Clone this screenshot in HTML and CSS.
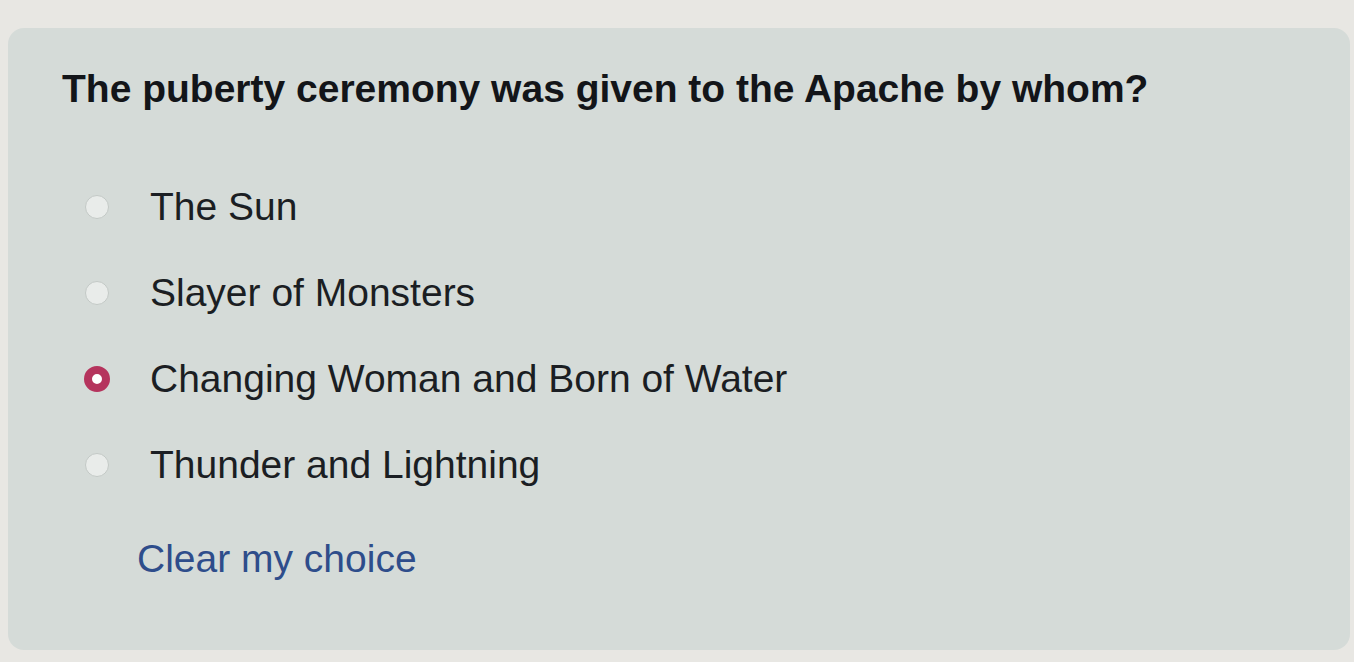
FILE: index.html
```html
<!DOCTYPE html>
<html>
<head>
<meta charset="utf-8">
<link rel="stylesheet" href="styles.css">
</head>
<body>
<div class="page">
  <div class="card">
    <h1 class="question">The puberty ceremony was given to the Apache by whom?</h1>
    <div class="options">
      <label class="option"><span class="radio"></span><span class="label">The Sun</span></label>
      <label class="option"><span class="radio"></span><span class="label">Slayer of Monsters</span></label>
      <label class="option"><span class="radio checked"></span><span class="label">Changing Woman and Born of Water</span></label>
      <label class="option"><span class="radio"></span><span class="label">Thunder and Lightning</span></label>
    </div>
    <a class="clear" href="#">Clear my choice</a>
  </div>
</div>
</body>
</html>
```
FILE: styles.css
```css
html, body {
  margin: 0;
  padding: 0;
  background: #e8e7e3;
  overflow: hidden;
}
.page {
  padding: 28px 4px 12px 8px;
  box-sizing: border-box;
  height: 662px;
  display: flex;
}
.card {
  flex: 1;
  background: #d5dbd8;
  border-radius: 16px;
  box-sizing: border-box;
  padding: 38px 0 0 54px;
  font-family: "Liberation Sans", Arial, sans-serif;
  display: flex;
  flex-direction: column;
  align-items: flex-start;
}
.question {
  margin: 0;
  font-size: 39px;
  line-height: 46px;
  font-weight: bold;
  color: #131519;
}
.options {
  display: flex;
  flex-direction: column;
  margin-top: 52px;
  padding-left: 23px;
}
.option {
  display: flex;
  align-items: center;
  height: 86px;
}
.radio {
  width: 24px;
  height: 24px;
  border-radius: 50%;
  background: #e9ecea;
  border: 1px solid #c3c9c6;
  box-sizing: border-box;
  flex: none;
}
.radio.checked {
  background: #ffffff;
  border: 8px solid #b5345d;
  width: 26px;
  height: 26px;
  margin-left: -1px;
  margin-right: -1px;
}
.label {
  margin-left: 41px;
  font-size: 39px;
  line-height: 86px;
  color: #1b1e23;
}
.clear {
  margin-top: 28px;
  margin-left: 75px;
  font-size: 39px;
  line-height: 46px;
  color: #2e4d8b;
  text-decoration: none;
}
```
